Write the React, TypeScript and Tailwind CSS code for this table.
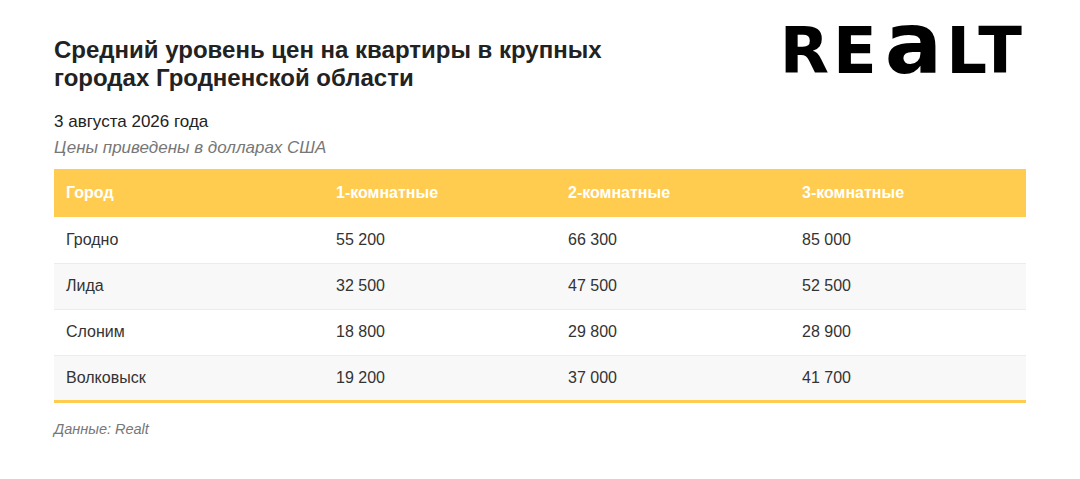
const rows = [
  { city: "Гродно", r1: "55 200", r2: "66 300", r3: "85 000" },
  { city: "Лида", r1: "32 500", r2: "47 500", r3: "52 500" },
  { city: "Слоним", r1: "18 800", r2: "29 800", r3: "28 900" },
  { city: "Волковыск", r1: "19 200", r2: "37 000", r3: "41 700" },
];

function Logo() {
  return (
    <div className="flex items-baseline gap-[4px] font-['DejaVu_Sans',sans-serif] font-bold text-black">
      <span className="text-[64px] leading-[0.75] tracking-[4px]">RE</span>
      <span className="text-[85px] leading-[0.4]">a</span>
      <span className="text-[64px] leading-[0.75] tracking-[2px]">LT</span>
    </div>
  );
}

export default function App() {
  return (
    <div className="h-[479px] w-[1080px] bg-white px-[54px] font-['Liberation_Sans',Arial,sans-serif] text-[#333]">
      <div className="flex items-start justify-between pt-[27px]">
        <h1 className="mt-[9px] text-[24px] font-bold leading-[28px] text-[#222]">
          Средний уровень цен на квартиры в крупных
          <br />
          городах Гродненской области
        </h1>
        <div className="mr-[2px]">
          <Logo />
        </div>
      </div>

      <p className="mt-[20px] text-[17px] leading-[20px] text-[#222]">3 августа 2026 года</p>
      <p className="mt-[6px] text-[17px] italic leading-[20px] text-[#777]">
        Цены приведены в долларах США
      </p>

      <table className="mt-[11px] w-full border-collapse text-left text-[16px]">
        <thead>
          <tr className="h-[48px] bg-[#ffcc4f] text-[16px] font-bold text-white">
            <th className="w-[270px] px-[12px]">Город</th>
            <th className="w-[232px] px-[12px]">1-комнатные</th>
            <th className="w-[234px] px-[12px]">2-комнатные</th>
            <th className="px-[12px]">3-комнатные</th>
          </tr>
        </thead>
        <tbody>
          {rows.map((row, i) => (
            <tr
              key={row.city}
              className={`h-[46px] ${
                i === rows.length - 1 ? "border-b-[3px] border-[#ffcc4f]" : "border-b border-[#ececec]"
              } ${i % 2 === 1 ? "bg-[#f8f8f8]" : "bg-white"}`}
            >
              <td className="px-[12px]">{row.city}</td>
              <td className="px-[12px]">{row.r1}</td>
              <td className="px-[12px]">{row.r2}</td>
              <td className="px-[12px]">{row.r3}</td>
            </tr>
          ))}
        </tbody>
      </table>

      <p className="mt-[16px] text-[14.5px] italic text-[#777]">Данные: Realt</p>
    </div>
  );
}
